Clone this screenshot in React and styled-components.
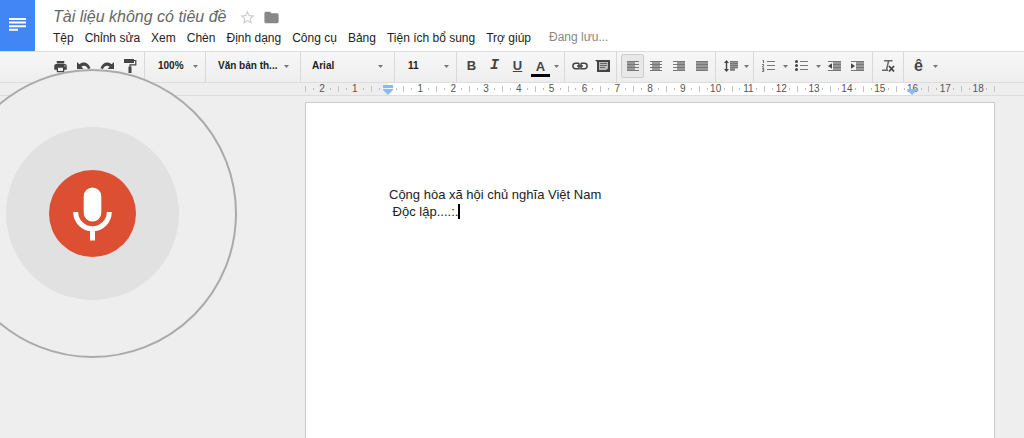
import React from "react";
import styled, { createGlobalStyle, css } from "styled-components";
import { MdPrint, MdFolder, MdStarBorder } from "react-icons/md";

const GlobalStyle = createGlobalStyle`
  * { box-sizing: border-box; }
  html, body, #root { height: 100%; }
  body {
    margin: 0;
    background: #eee;
    color: #333;
    font-family: "Liberation Sans", Arial, sans-serif;
  }
`;

const Shell = styled.div`
  position: relative;
  display: flex;
  flex-direction: column;
  min-height: 100%;
  overflow: hidden;
`;

const Header = styled.header`
  display: flex;
  height: 51px;
  background: #fff;
`;

const HomeLink = styled.a`
  display: flex;
  align-items: center;
  justify-content: center;
  width: 35px;
  padding-bottom: 2px;
  background: #4285f4;
`;

const HeaderMain = styled.div`
  display: flex;
  flex-direction: column;
  padding: 6px 0 0 18px;
`;

const TitleRow = styled.div`
  display: flex;
  align-items: center;
  height: 22px;
`;

const Title = styled.h1`
  margin: 0 9px 0 0;
  font-size: 16px;
  font-weight: 400;
  font-style: italic;
  line-height: 22px;
  color: #666;
  white-space: nowrap;
`;

const IconButton = styled.button`
  display: flex;
  align-items: center;
  justify-content: center;
  width: 24px;
  height: 22px;
  padding: 0;
  border: 0;
  background: none;
  color: ${(p) => p.$color || "#444"};
`;

const MenuBar = styled.nav`
  display: flex;
  align-items: center;
  gap: 11px;
  height: 20px;
`;

const MenuButton = styled.button`
  padding: 0;
  border: 0;
  background: none;
  font: 12px/20px "Liberation Sans", Arial, sans-serif;
  color: #222;
  white-space: nowrap;
`;

const SaveState = styled.span`
  margin-left: 7px;
  font-size: 12px;
  line-height: 20px;
  padding-bottom: 2px;
  color: #888;
  white-space: nowrap;
`;

const Toolbar = styled.div`
  display: flex;
  height: 32px;
  border-top: 1px solid #ddd;
  border-bottom: 1px solid #ddd;
  background: linear-gradient(#f7f7f7, #eee);
`;

const Group = styled.div`
  display: flex;
  flex: none;
  align-items: center;
  width: ${(p) => p.$width}px;
  padding-left: ${(p) => p.$pad || 0}px;
  padding-bottom: 2px;
  border-right: ${(p) => (p.$last ? "0" : "1px solid #d9d9d9")};
`;

const ToolButton = styled.button`
  display: flex;
  flex: none;
  align-items: center;
  justify-content: center;
  width: ${(p) => p.$width || 23}px;
  height: 24px;
  padding: 0;
  border: 1px solid transparent;
  border-radius: 2px;
  background: none;
  color: #444;
  font: bold 13px/22px "Liberation Sans", Arial, sans-serif;
  ${(p) =>
    p.$active &&
    css`
      border-color: #ccc;
      background: #e8e8e8;
    `}
`;

const SelectBox = styled.label`
  display: flex;
  flex: 1;
  align-items: center;
  min-width: 0;
  padding-right: ${(p) => (p.$wide ? 11 : 7)}px;
`;

const Select = styled.select`
  flex: 1;
  min-width: 0;
  height: 24px;
  padding: 0;
  border: 0;
  background: none;
  appearance: none;
  color: #222;
  font: bold 10px/24px "Liberation Sans", Arial, sans-serif;
`;

const RulerRow = styled.div`
  height: 13px;
  padding: 0 29px 0 305px;
  border-bottom: 1px solid #ddd;
  background: #eee;
`;

const RulerTrack = styled.div`
  position: relative;
  display: flex;
  align-items: center;
  height: 12px;
  background: linear-gradient(#fff, #fff) 50% 0 / 76% 100% no-repeat;
`;

const RulerCell = styled.div`
  display: flex;
  flex: 1 1 0;
  align-items: center;
  min-width: 0;
  font-size: 10px;
  line-height: 12px;
  color: #555;
`;

const Tick = styled.i`
  flex: none;
  width: 1px;
  height: 6px;
  margin-right: auto;
  background: #c4c4c4;
`;

const EndTick = styled(Tick)`
  margin-right: 0;
`;

const Dot = styled.i`
  flex: none;
  width: 1px;
  height: 2px;
  background: #bbb;
`;

const LastDot = styled(Dot)`
  margin-right: auto;
`;

const RulerLabel = styled.span`
  width: 12px;
  margin: 0 2px;
  text-align: center;
`;

const Marker = styled.svg`
  position: absolute;
  top: ${(p) => p.$top}px;
  left: ${(p) => p.$at}%;
  width: 10px;
  height: 10px;
  margin-left: -5px;
`;

const Workspace = styled.main`
  display: flex;
  flex: 1;
  padding: 6px 29px 0 305px;
`;

const Page = styled.article`
  flex: 1;
  padding: 83px 83px 0;
  border: 1px solid #ccc;
  border-bottom: 0;
  background: #fff;
`;

const Line = styled.p`
  margin: 0;
  font-size: 13px;
  line-height: 17px;
  color: #222;
  white-space: pre;
`;

const TextCaret = styled.span`
  display: inline-block;
  width: 2px;
  height: 15px;
  background: #000;
  vertical-align: -3px;
`;

const VoiceRing = styled.div`
  position: absolute;
  top: 69px;
  left: -52px;
  display: flex;
  align-items: center;
  justify-content: center;
  width: 289px;
  height: 289px;
  border: 2px solid #aaa;
  border-radius: 50%;
  background: #eee;
`;

const VoiceHalo = styled.div`
  display: flex;
  align-items: center;
  justify-content: center;
  width: 173px;
  height: 173px;
  border-radius: 50%;
  background: #e1e1e1;
`;

const VoiceButton = styled.button`
  display: flex;
  align-items: center;
  justify-content: center;
  width: 87px;
  height: 87px;
  padding: 0;
  border: 0;
  border-radius: 50%;
  background: #dd4f33;
`;

const Caret = () => (
  <svg width="5" height="3" viewBox="0 0 5 3" fill="#777">
    <path d="M0 0h5L2.500 3z" />
  </svg>
);

const Glyph = ({ w = 14, h = 14, children }) => (
  <svg width={w} height={h} viewBox={`0 0 ${w} ${h}`} fill="currentColor">
    {children}
  </svg>
);

const Undo = ({ flip }) => (
  <Glyph w={14} h={12}>
    <path
      transform={flip ? "translate(14 0) scale(-1 1)" : undefined}
      d="M0 2v7h6.500L4.300 6.800C6.300 5.200 9.500 5.200 11 9l2.500-.8C11.500 2 6 1 2.300 4.300z"
    />
  </Glyph>
);

const PaintRoller = () => (
  <Glyph w={14} h={16}>
    <path d="M1 1h10v4H1z" />
    <path d="M11 2.500h1.800v4.300H7v2" fill="none" stroke="currentColor" strokeWidth="1.200" />
    <path d="M5.500 8.500h3V15h-3z" />
  </Glyph>
);

const LinkIcon = () => (
  <Glyph w={16} h={8}>
    <path
      d="M7 1.300H3.600a2.700 2.700 0 0 0 0 5.400H7V1.300M9 1.300h3.400a2.700 2.700 0 0 1 0 5.400H9V1.300M5 4h6"
      fill="none"
      stroke="currentColor"
      strokeWidth="1.500"
    />
  </Glyph>
);

const CommentIcon = () => (
  <Glyph w={15} h={12}>
    <path d="M0 0h15v12H2V2z" />
    <path d="M4 2h9v6.500l-2 1.500H4z" fill="#bbb" />
    <path d="M5 3.500h7M5 5.500h7M5 7.500h5" stroke="#666" />
  </Glyph>
);

const AlignIcon = ({ kind }) => {
  const [x, width] = { left: [0, 8], center: [2, 8], right: [4, 8], justify: [0, 12] }[kind];
  return (
    <Glyph w={12} h={10}>
      <rect x={x} y="0" width={width} height="10" fill="#999" />
      {[0, 3, 6, 9].map((y) => (
        <rect key={y} x="0" y={y} width="12" height="1" fill="#777" />
      ))}
    </Glyph>
  );
};

const SpacingIcon = () => (
  <Glyph w={14} h={12}>
    <path d="M2.500 0L5 3H3.200v6H5l-2.500 3L0 9h1.800V3H0z" />
    <path d="M6 1h8v7.500h-3V11H6z" fill="#999" />
    <path d="M6 1.500h8M6 3.500h8M6 5.500h8M6 7.500h8M6 9.500h5" stroke="#777" />
  </Glyph>
);

const ListIcon = ({ numbered }) => (
  <Glyph w={13} h={12}>
    <path d="M5 1.500h8M5 5.500h8M5 9.500h8" stroke="#777" />
    {numbered ? (
      <path
        d="M.5.5h1V3M.2 4.500h1.500v.8L.4 7h1.600M.2 8.500h1.500v3H.2M.5 10h1.200"
        fill="none"
        stroke="#666"
      />
    ) : (
      <g>
        <circle cx="1.500" cy="1.500" r="1.500" />
        <circle cx="1.500" cy="5.500" r="1.500" />
        <circle cx="1.500" cy="9.500" r="1.500" />
      </g>
    )}
  </Glyph>
);

const IndentIcon = ({ out }) => (
  <Glyph w={13} h={10}>
    <path d="M5 0h8v10H5z" fill="#999" />
    <path d="M0 .5h13M5 3.500h8M5 6.500h8M0 9.500h13" stroke="#777" />
    <path d={out ? "M4 2.200v5.600L0 5z" : "M0 2.200v5.600L4 5z"} />
  </Glyph>
);

const ClearIcon = () => (
  <Glyph w={15} h={14}>
    <path d="M3 1.800h8.500M7.600 1.800L5.500 11M1 11.300h6" fill="none" stroke="#666" strokeWidth="1.500" />
    <path d="M8 7l5 5.500M13 7l-5 5.500" stroke="currentColor" strokeWidth="1.800" />
  </Glyph>
);

const BoldIcon = styled.b`
  font-size: 13px;
`;
const ItalicIcon = styled.em`
  font-family: "Liberation Mono", monospace;
  font-size: 15px;
  font-weight: 700;
`;
const UnderlineIcon = styled.u`
  font-size: 13px;
`;
const ColorIcon = styled.span`
  width: 19px;
  margin-top: 3px;
  border-bottom: 3px solid #000;
  font-size: 13px;
  line-height: 15px;
`;
const AccentIcon = styled.span`
  font-size: 16px;
`;

const Picker = ({ label, value, wide }) => (
  <SelectBox $wide={wide}>
    <Select aria-label={label} defaultValue={value}>
      <option>{value}</option>
    </Select>
    <Caret />
  </SelectBox>
);

const menus = ["Tệp", "Chỉnh sửa", "Xem", "Chèn", "Định dạng", "Công cụ", "Bảng", "Tiện ích bổ sung", "Trợ giúp"];
const marks = [2, 1, 0, ...Array.from({ length: 18 }, (_, i) => i + 1)];

export default function App() {
  return (
    <Shell>
      <GlobalStyle />
      <Header>
        <HomeLink href="#" aria-label="Docs">
          <svg width="17" height="13" viewBox="0 0 17 13" fill="#fff">
            <path d="M0 0h17v2H0zM0 3.600h17v2H0zM0 7.200h17v2H0zM0 10.800h9v2H0z" />
          </svg>
        </HomeLink>
        <HeaderMain>
          <TitleRow>
            <Title>Tài liệu không có tiêu đề</Title>
            <IconButton $color="#ccc" aria-label="Star"><MdStarBorder size={17} /></IconButton>
            <IconButton $color="#888" aria-label="Folder"><MdFolder size={17} /></IconButton>
          </TitleRow>
          <MenuBar>
            {menus.map((m) => <MenuButton key={m}>{m}</MenuButton>)}
            <SaveState>Đang lưu...</SaveState>
          </MenuBar>
        </HeaderMain>
      </Header>

      <Toolbar role="toolbar">
        <Group $width={145} $pad={49}>
          <ToolButton aria-label="Print"><MdPrint size={15} /></ToolButton>
          <ToolButton aria-label="Undo"><Undo /></ToolButton>
          <ToolButton aria-label="Redo"><Undo flip /></ToolButton>
          <ToolButton aria-label="Paint format"><PaintRoller /></ToolButton>
        </Group>
        <Group $width={61} $pad={13}><Picker label="Zoom" value="100%" /></Group>
        <Group $width={95} $pad={12}><Picker label="Style" value="Văn bản th..." wide /></Group>
        <Group $width={94} $pad={11}><Picker label="Font" value="Arial" wide /></Group>
        <Group $width={62} $pad={13}><Picker label="Size" value="11" /></Group>
        <Group $width={108} $pad={3}>
          <ToolButton aria-label="Bold"><BoldIcon>B</BoldIcon></ToolButton>
          <ToolButton aria-label="Italic"><ItalicIcon>I</ItalicIcon></ToolButton>
          <ToolButton aria-label="Underline"><UnderlineIcon>U</UnderlineIcon></ToolButton>
          <ToolButton aria-label="Text colour"><ColorIcon>A</ColorIcon></ToolButton>
          <ToolButton $width={9} aria-label="Colours"><Caret /></ToolButton>
        </Group>
        <Group $width={52} $pad={3}>
          <ToolButton aria-label="Link"><LinkIcon /></ToolButton>
          <ToolButton aria-label="Comment"><CommentIcon /></ToolButton>
        </Group>
        <Group $width={99} $pad={4}>
          {["left", "center", "right", "justify"].map((k) => (
            <ToolButton key={k} aria-label={k} $active={k === "left"}><AlignIcon kind={k} /></ToolButton>
          ))}
        </Group>
        <Group $width={38} $pad={3}>
          <ToolButton aria-label="Line spacing"><SpacingIcon /></ToolButton>
          <ToolButton $width={9} aria-label="Spacing options"><Caret /></ToolButton>
        </Group>
        <Group $width={119} $pad={3}>
          <ToolButton aria-label="Numbered list"><ListIcon numbered /></ToolButton>
          <ToolButton $width={10} aria-label="Number styles"><Caret /></ToolButton>
          <ToolButton aria-label="Bulleted list"><ListIcon /></ToolButton>
          <ToolButton $width={10} aria-label="Bullet styles"><Caret /></ToolButton>
          <ToolButton aria-label="Decrease indent"><IndentIcon out /></ToolButton>
          <ToolButton aria-label="Increase indent"><IndentIcon /></ToolButton>
        </Group>
        <Group $width={31} $pad={4}>
          <ToolButton aria-label="Clear formatting"><ClearIcon /></ToolButton>
        </Group>
        <Group $width={40} $pad={3} $last>
          <ToolButton aria-label="Input tools"><AccentIcon>ê</AccentIcon></ToolButton>
          <ToolButton $width={10} aria-label="Input options"><Caret /></ToolButton>
        </Group>
      </Toolbar>

      <RulerRow>
        <RulerTrack>
          {marks.map((n, i) => (
            <RulerCell key={i}>
              <Tick />
              <Dot />
              <RulerLabel>{n || ""}</RulerLabel>
              <LastDot />
            </RulerCell>
          ))}
          <EndTick />
          <Marker $at={12} $top={2} viewBox="0 0 10 10" fill="#8ab8f8">
            <path d="M0 0h10v3H0zM0 4h10v1L5 10 0 5z" />
          </Marker>
          <Marker $at={88} $top={6} viewBox="0 0 10 10" fill="#8ab8f8">
            <path d="M0 0h10v1L5 6 0 1z" />
          </Marker>
        </RulerTrack>
      </RulerRow>

      <Workspace>
        <Page>
          <Line>Cộng hòa xã hội chủ nghĩa Việt Nam</Line>
          <Line> Độc lập....:.<TextCaret /></Line>
        </Page>
      </Workspace>

      <VoiceRing>
        <VoiceHalo>
          <VoiceButton aria-label="Voice typing">
            <svg width="40" height="54" viewBox="0 0 40 54">
              <rect x="10.700" y="0.500" width="17.600" height="34" rx="8.800" fill="#fff" />
              <path d="M2.700 25a16.800 16.800 0 0 0 33.600 0M19.500 41v12.500" fill="none" stroke="#fff" strokeWidth="5" />
            </svg>
          </VoiceButton>
        </VoiceHalo>
      </VoiceRing>
    </Shell>
  );
}
